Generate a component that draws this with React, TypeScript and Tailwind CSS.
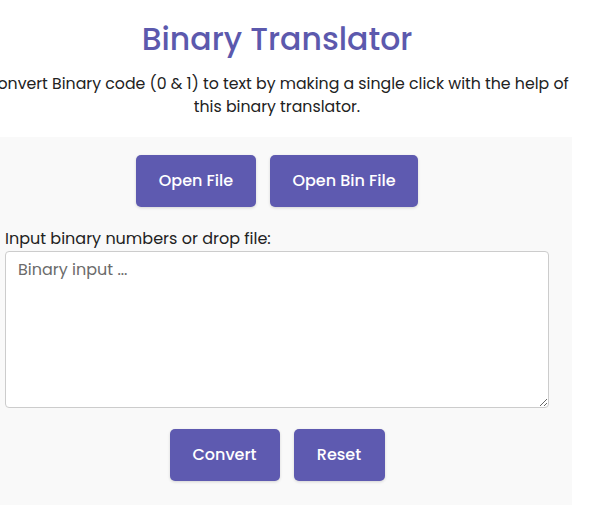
import React from "react"

const Btn: React.FC<{ label: string; w: string }> = ({ label, w }) => (
    <button
        className={`${w} h-[52px] rounded-[5px] bg-[#5e5ab0] text-white text-[16px] font-medium shadow-[0_1px_3px_rgba(0,0,0,0.15)]`}
    >
        {label}
    </button>
)

export default function App() {
    return (
        <div className="font-['Poppins','Inter',sans-serif] bg-white min-h-[505px] overflow-hidden text-[#222]">
            <div className="w-[590px] -ml-[18px]">
                <h1 className="pt-[15px] text-center text-[31.5px] leading-[48px] font-medium text-[#5c59ad]">
                    Binary Translator
                </h1>
                <p className="mt-[9px] text-center text-[15.75px] leading-[23px]">
                    Convert Binary code (0 &amp; 1) to text by making a single click with the help of this binary translator.
                </p>
                <div className="mt-[19px] bg-[#f9f9f9] px-[23px] pt-[18px] pb-[30px]">
                    <div className="flex justify-center gap-[14px]">
                        <Btn label="Open File" w="w-[120px]" />
                        <Btn label="Open Bin File" w="w-[148px]" />
                    </div>
                    <label className="block mt-[20px] text-[16px] leading-[23px]">
                        Input binary numbers or drop file:
                    </label>
                    <textarea
                        placeholder="Binary input ..."
                        className="block w-full h-[157px] mt-[1px] rounded-[4px] border border-[#ccc] bg-white px-[12px] py-[6px] text-[16px] leading-[24px] placeholder:text-[#6b6b6b] outline-none"
                    />
                    <div className="flex justify-center gap-[14px] mt-[21px]">
                        <Btn label="Convert" w="w-[110px]" />
                        <Btn label="Reset" w="w-[91px]" />
                    </div>
                </div>
            </div>
        </div>
    )
}
